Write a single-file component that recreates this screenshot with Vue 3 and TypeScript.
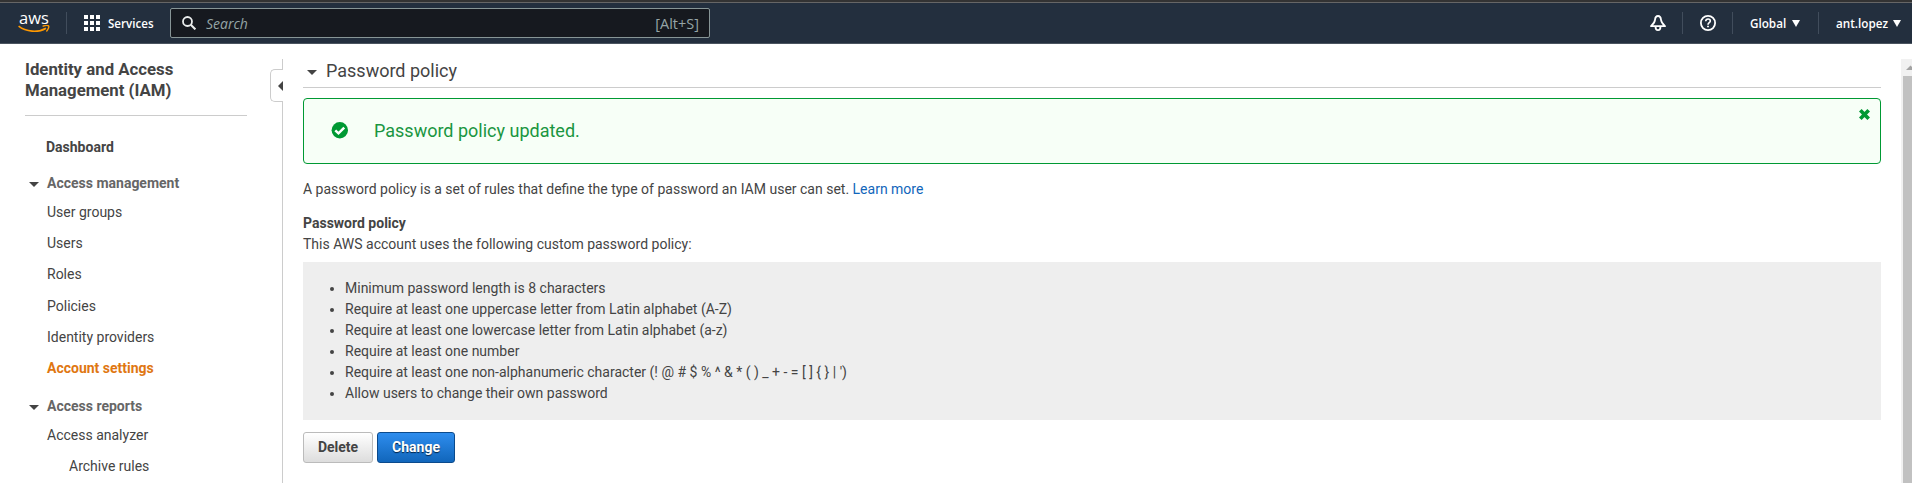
<script setup lang="ts">
interface NavItem {
  label: string
  kind: 'top' | 'group' | 'leaf' | 'sub'
  active?: boolean
}

const navItems: NavItem[] = [
  { label: 'Dashboard', kind: 'top' },
  { label: 'Access management', kind: 'group' },
  { label: 'User groups', kind: 'leaf' },
  { label: 'Users', kind: 'leaf' },
  { label: 'Roles', kind: 'leaf' },
  { label: 'Policies', kind: 'leaf' },
  { label: 'Identity providers', kind: 'leaf' },
  { label: 'Account settings', kind: 'leaf', active: true },
  { label: 'Access reports', kind: 'group' },
  { label: 'Access analyzer', kind: 'leaf' },
  { label: 'Archive rules', kind: 'sub' },
]

const rules: string[] = [
  'Minimum password length is 8 characters',
  'Require at least one uppercase letter from Latin alphabet (A-Z)',
  'Require at least one lowercase letter from Latin alphabet (a-z)',
  'Require at least one number',
  "Require at least one non-alphanumeric character (! @ # $ % ^ & * ( ) _ + - = [ ] { } | ')",
  'Allow users to change their own password',
]
</script>

<template>
  <div class="page">
    <header class="topbar">
      <a class="logo">
        <span class="logo-text">aws</span>
        <svg class="smile" width="32" height="9" viewBox="0 0 32 9">
          <path d="M0.6 1.2C8 7 20 8 28 3.2" fill="none" stroke="#f90" stroke-width="1.700" />
          <path d="M24.6 1.3C27 .5 30 .3 30.6 1s-.3 3.600-2.200 5.400" fill="none" stroke="#f90" stroke-width="1.400" />
        </svg>
      </a>
      <i class="sep"></i>
      <button class="services">
        <svg width="16" height="16" viewBox="0 0 16 16" fill="#fff">
          <template v-for="r in 3" :key="r">
            <rect v-for="c in 3" :key="c" :x="(c - 1) * 6" :y="(r - 1) * 6" width="4" height="4" />
          </template>
        </svg>
        <span class="services-text">Services</span>
      </button>
      <div class="search">
        <svg width="14" height="14" viewBox="0 0 14 14" fill="none" stroke="#eaeded" stroke-width="1.8">
          <circle cx="5.500" cy="5.500" r="4.500" />
          <path d="M8.800 8.800L13.400 13.400" stroke-width="2" />
        </svg>
        <span class="placeholder">Search</span>
        <span class="shortcut">[Alt+S]</span>
      </div>
      <div class="tools">
        <svg class="bell" width="16" height="16" viewBox="0 0 16 16" fill="none" stroke="#fff" stroke-width="1.800" stroke-linejoin="round">
          <path d="M8 1C6 1 5.200 2.600 5 4.800C4.800 7.500 3.200 9 1 11.200H15C12.800 9 11.200 7.500 11 4.800C10.800 2.600 10 1 8 1Z" />
          <path d="M5.500 11.500C5.500 14 6.500 15.100 8 15.100S10.500 14 10.500 11.500" />
        </svg>
        <i class="sep"></i>
        <svg class="help" width="16" height="16" viewBox="0 0 16 16" fill="none" stroke="#fff" stroke-width="1.800">
          <circle cx="8" cy="8" r="7.100" />
          <path d="M5.700 6.300C5.800 4.700 6.700 4 8 4S10.300 4.800 10.300 6C10.300 7.700 8 7.600 8 9.700" stroke-width="1.600" />
          <path d="M8 10.700V12.300" stroke-width="1.800" />
        </svg>
        <i class="sep"></i>
        <button class="menu global"><span>Global</span><i class="caret"></i></button>
        <i class="sep"></i>
        <button class="menu account"><span>ant.lopez</span><i class="caret"></i></button>
      </div>
    </header>

    <div class="body">
      <aside class="sidebar">
        <h2 class="service-name">Identity and Access<br />Management (IAM)</h2>
        <nav class="nav">
          <a v-for="item in navItems" :key="item.label" :class="['item', item.kind, { active: item.active }]">
            <svg v-if="item.kind === 'group'" class="twisty" width="10" height="5" viewBox="0 0 10 5"><path d="M0 0H10L5 5Z" fill="#444" /></svg>
            <span>{{ item.label }}</span>
          </a>
        </nav>
      </aside>

      <div class="rail">
        <div class="rail-top"></div>
        <div class="rail-tab">
          <svg width="5" height="10" viewBox="0 0 5 10"><path d="M5 0V10L0 5Z" fill="#444" /></svg>
        </div>
        <div class="rail-line"></div>
      </div>

      <main class="content">
        <h1 class="heading">
          <svg width="10" height="5" viewBox="0 0 10 5"><path d="M0 0H10L5 5Z" fill="#444" /></svg>
          <span>Password policy</span>
        </h1>

        <section class="alert">
          <svg class="check" width="17" height="17" viewBox="0 0 17 17">
            <circle cx="8.800" cy="8.200" r="8.200" fill="#093" />
            <path d="M4.300 8.300L7.500 11.300L13.200 5.600" fill="none" stroke="#fff" stroke-width="2.500" />
          </svg>
          <span class="alert-text">Password policy updated.</span>
          <svg class="close" width="11" height="11" viewBox="0 0 11 11">
            <path d="M1.300 1.300L9.700 9.700M9.700 1.300L1.300 9.700" stroke="#093" stroke-width="3.700" />
          </svg>
        </section>

        <p class="intro">A password policy is a set of rules that define the type of password an IAM user can set. <a class="learn-more">Learn more</a></p>
        <h3 class="subheading">Password policy</h3>
        <p class="summary">This AWS account uses the following custom password policy:</p>

        <ul class="rules">
          <li v-for="rule in rules" :key="rule">{{ rule }}</li>
        </ul>

        <div class="actions">
          <button class="btn">Delete</button>
          <button class="btn primary">Change</button>
        </div>
      </main>

      <div class="scrollbar">
        <svg width="11" height="17" viewBox="0 0 11 17"><path d="M5 11L9.500 6.500L14 11Z" fill="#a3a3a3" /></svg>
        <div class="thumb"></div>
      </div>
    </div>
  </div>
</template>

<style>
html,
body {
  margin: 0;
  background: #fff;
  overflow: hidden;
}
</style>

<style scoped>
.page {
  width: 1912px;
  height: 483px;
  overflow: hidden;
  display: flex;
  flex-direction: column;
  font: 14px/21px Roboto, "Liberation Sans", sans-serif;
  color: #444;
  white-space: nowrap;
}
.page * {
  box-sizing: border-box;
}
button {
  font: inherit;
  color: inherit;
  background: none;
  border: 0;
  padding: 0;
  margin: 0;
}
h1, h2, h3, p, ul {
  margin: 0;
  padding: 0;
}
svg {
  display: block;
  flex: none;
}

/* Top bar */
.topbar {
  flex: none;
  height: 44px;
  border-top: 2px solid #333;
  border-bottom: 1px solid #4a545f;
  box-shadow: inset 0 1px #666;
  background: #232f3e;
  padding: 1px 11px 0 18px;
  display: flex;
  align-items: center;
  color: #fff;
  font-family: "Open Sans", "Noto Sans", sans-serif;
  font-size: 12px;
  font-weight: 600;
}
.logo {
  width: 32px;
  height: 22px;
  display: flex;
  flex-direction: column;
  align-items: center;
}
.logo-text {
  font-size: 16.5px;
  font-weight: 500;
  line-height: 12px;
  height: 14px;
}
.sep {
  width: 1px;
  height: 22px;
  background: #414d5c;
}
.logo + .sep {
  margin-left: 16px;
}
.services {
  display: flex;
  align-items: center;
  margin-left: 17px;
  width: 86px;
  gap: 8px;
}
.services-text {
  font-size: 11.600px;
}
.search {
  width: 540px;
  height: 30px;
  border: 1px solid #879596;
  border-radius: 2px;
  background: #16191f;
  display: flex;
  align-items: center;
  padding: 0 10px 0 11px;
  font-weight: 400;
  color: #95a5a6;
}
.placeholder {
  margin-left: 10px;
  font-style: italic;
  font-size: 14px;
}
.shortcut {
  margin-left: auto;
  font-size: 14.500px;
}
.tools {
  margin-left: auto;
  display: flex;
  align-items: center;
}
.bell { margin-right: 16px; }
.help { margin: 0 16px 0 17px; }
.menu {
  display: flex;
  align-items: center;
  justify-content: space-between;
  font-size: 11.700px;
}
.global { width: 50px; margin: 0 18px 0 17px; }
.account { width: 65px; margin-left: 17px; }
.caret {
  border: 4px solid transparent;
  border-top: 7px solid #fff;
  border-bottom: 0;
}

/* Sidebar */
.body {
  flex: 1;
  display: flex;
  min-height: 0;
}
.sidebar {
  width: 270px;
  padding: 15px 23px 0 25px;
}
.service-name {
  font-size: 16.800px;
  line-height: 21px;
  font-weight: 700;
  height: 57px;
  border-bottom: 1px solid #ccc;
}
.nav {
  display: flex;
  flex-direction: column;
  padding-top: 21px;
}
.item {
  display: flex;
  align-items: center;
  flex: none;
  height: 21px;
  margin-bottom: 10.200px;
  padding-left: 22px;
}
.top {
  font-weight: 700;
  margin-bottom: 15px;
  padding-left: 21px;
}
.group {
  font-weight: 700;
  color: #666;
  padding-left: 4px;
  margin-bottom: 8px;
}
.twisty { margin: 2px 8px 0 0; }
.active {
  font-weight: 700;
  color: #e07712;
  margin-bottom: 17px;
}
.sub { padding-left: 44px; }

/* Divider with the collapse tab */
.rail {
  width: 13px;
  padding-top: 15px;
  display: flex;
  flex-direction: column;
}
.rail-top {
  height: 10px;
  border-right: 1px solid #ccc;
}
.rail-tab {
  height: 33px;
  border: 1px solid #ccc;
  border-right: 0;
  border-radius: 5px 0 0 5px;
  display: flex;
  align-items: center;
  justify-content: flex-end;
}
.rail-line {
  flex: 1;
  border-right: 1px solid #ccc;
}

/* Content */
.content {
  width: 1598px;
  padding: 16px 0 0 20px;
}
.heading {
  height: 28px;
  border-bottom: 1px solid #ccc;
  display: flex;
  align-items: flex-start;
  gap: 9px;
  padding-left: 4px;
  font-size: 18px;
  line-height: 22px;
  font-weight: 400;
}
.heading svg { margin-top: 10px; }
.alert {
  margin-top: 10px;
  height: 66px;
  border: 1px solid #093;
  border-radius: 4px;
  background: #f7fff7;
  display: flex;
  align-items: center;
  padding: 0 10px 2px 27px;
  color: #1a9641;
}
.alert-text {
  margin-left: 26px;
  font-size: 18px;
}
.close {
  margin-left: auto;
  align-self: flex-start;
  margin-top: 10px;
}
.intro { margin-top: 15px; }
.learn-more { color: #1166bb; }
.subheading {
  margin-top: 13px;
  font-size: 14px;
  line-height: 21px;
  font-weight: 700;
}
.rules {
  margin-top: 7px;
  height: 158px;
  background: #eee;
  padding: 16px 0 0 42px;
}
.actions {
  display: flex;
  gap: 4px;
  margin-top: 12px;
}
.btn {
  width: 70px;
  height: 31px;
  border: 1px solid #bbb;
  border-radius: 3px;
  background: linear-gradient(#fff, #ddd);
  font-weight: 700;
}
.primary {
  width: 78px;
  border-color: #0b4a8c;
  background: linear-gradient(#2e8dee, #1166bb);
  color: #fff;
  text-shadow: 0 1px 1px #024;
}

/* Scrollbar */
.scrollbar {
  width: 11px;
  margin: 15px 0 0 auto;
  background: #f1f1f1;
  display: flex;
  flex-direction: column;
}
.thumb {
  flex: 1;
  margin-left: 2px;
  background: #c1c1c1;
}
</style>
